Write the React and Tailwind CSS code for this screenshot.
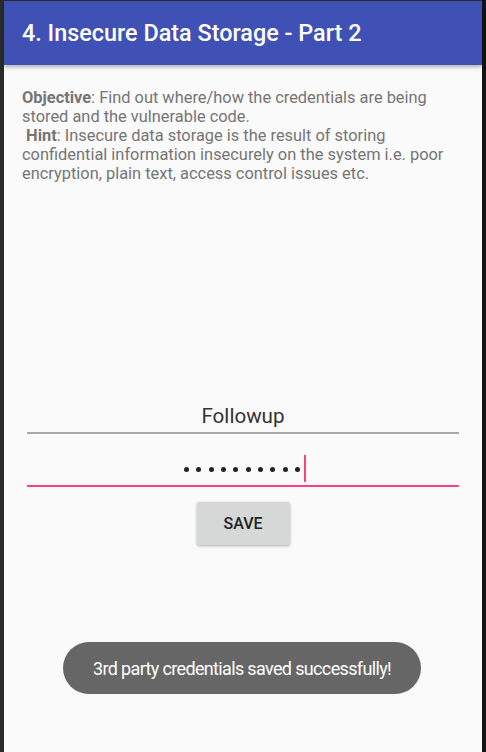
export default function App() {
  const dots = Array.from({ length: 10 })
  return (
    <div className="flex h-[752px] w-[486px] overflow-hidden bg-[#fafafa]" style={{ fontFamily: 'Roboto, "Noto Sans", sans-serif' }}>
      <div className="w-[4px] bg-[#2b2b2b]" />
      <div className="relative flex flex-1 flex-col border-t border-[#2b2b2b] bg-[#fafafa]">
        <header className="flex h-[64px] items-center bg-[#3f51b5] pl-[18px] pt-[2px] text-[23.4px] font-medium text-white shadow-[0_2px_4px_rgba(0,0,0,0.3)]">
          4. Insecure Data Storage - Part 2
        </header>

        <div className="pl-[18px] pr-[18px] pt-[23px] text-[16.4px] leading-[19px] text-[#757575]">
          <p>
            <b className="font-bold">Objective</b>: Find out where/how the credentials are being stored and the vulnerable code.
          </p>
          <p>
            &nbsp;<b className="font-bold">Hint</b>: Insecure data storage is the result of storing confidential information insecurely on the system i.e. poor encryption, plain text, access control issues etc.
          </p>
        </div>

        <div className="mx-[23px] mt-[217px] flex flex-col">
          <div className="flex h-[34px] items-center justify-center border-b-2 border-[#a8a8a8] text-[20.6px] text-[#333]">
            Followup
          </div>
          <div className="mt-[18px] flex h-[35px] items-center justify-center border-b-2 border-[#ff4081]">
            <div className="ml-[4px] flex items-center gap-[7.3px] pt-[2px]">
              {dots.map((_, i) => (
                <span key={i} className="h-[5px] w-[5px] rounded-full bg-[#222]" />
              ))}
            </div>
            <span className="ml-[4px] h-[27px] w-[2px] bg-[#ff4081]" />
          </div>
          <div className="mt-[15px] flex justify-center">
            <button className="h-[43px] w-[93px] rounded-[2px] bg-[#d6d7d7] text-[16px] font-medium text-[#222] shadow-[0_1px_3px_rgba(0,0,0,0.3)]">
              SAVE
            </button>
          </div>
        </div>

        <div className="absolute left-[59px] top-[641px] flex h-[52px] w-[358px] items-center justify-center rounded-full bg-[#666666] text-[18px] text-white">
          <span className="tracking-[-0.65px]">3rd party credentials saved successfully!</span>
        </div>
      </div>
      <div className="w-[4px] bg-[#141414]" />
    </div>
  )
}
